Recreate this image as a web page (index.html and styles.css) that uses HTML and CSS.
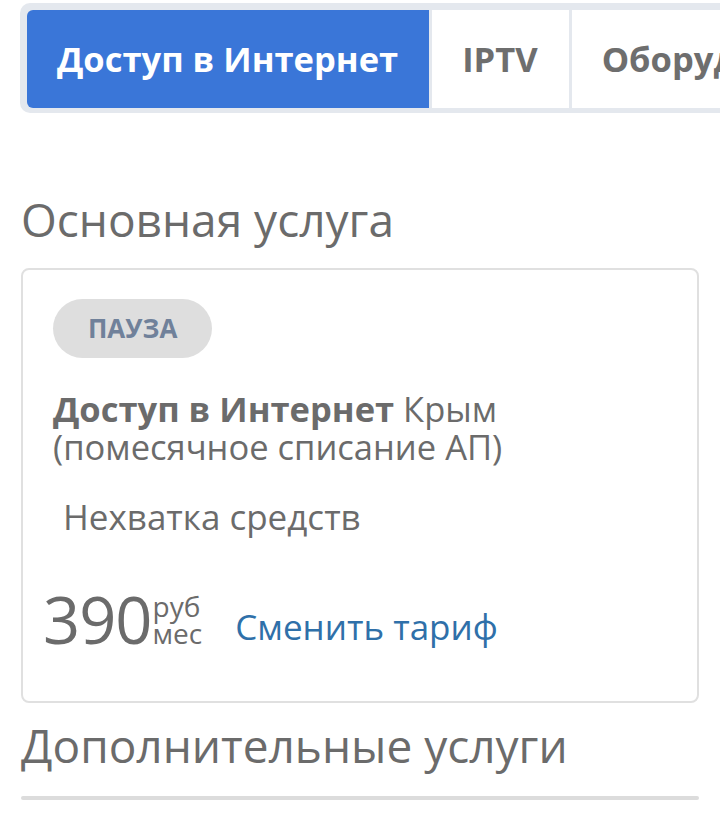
FILE: index.html
```html
<!DOCTYPE html>
<html lang="ru">
<head>
    <meta charset="UTF-8">
    <meta name="viewport" content="width=device-width, initial-scale=1.0">
    <title>Мои услуги</title>
    <link rel="stylesheet" href="styles.css">
</head>
<body>
    <!-- Tabs -->
    <div class="tabs">
        <div class="tab active">Доступ в Интернет</div>
        <div class="tab">IPTV</div>
        <div class="tab">Оборудование</div>
    </div>

    <div class="page">
        <h2 class="section-title">Основная услуга</h2>

        <div class="card">
            <span class="badge">ПАУЗА</span>
            <div class="service-name"><b>Доступ в Интернет</b> Крым (помесячное списание АП)</div>
            <div class="service-status">Нехватка средств</div>
            <div class="price-row">
                <div class="price">
                    <span class="price-value">390</span>
                    <span class="price-unit">
                        <span>руб</span>
                        <span>мес</span>
                    </span>
                </div>
                <a href="#" class="change-link">Сменить тариф</a>
            </div>
        </div>

        <h2 class="section-title extra">Дополнительные услуги</h2>
        <div class="divider"></div>
    </div>
</body>
</html>
```

FILE: styles.css
```css
/* Basic Reset */
* {
    box-sizing: border-box;
    margin: 0;
    padding: 0;
}

body {
    font-family: "Open Sans", "Noto Sans", Arial, sans-serif;
    color: #6b6b6b;
    background: #fff;
    overflow-x: hidden;
    padding-top: 3px;
}

/* Tabs */
.tabs {
    display: flex;
    gap: 3px;
    width: max-content;
    margin-left: 20px;
    padding: 7px 0 5px 7px;
    background: #e4e8ee;
    border-radius: 10px;
    white-space: nowrap;
}

.tab {
    height: 98px;
    line-height: 98px;
    padding: 0 31px 0 30px;
    background: #fff;
    font-size: 34.5px;
    font-weight: 700;
    color: #6e6e6e;
}

.tab.active {
    background: #3a76d8;
    color: #fff;
    border-radius: 6px 0 0 6px;
}

/* Content */
.page {
    padding: 0 21px;
}

.section-title {
    font-size: 46px;
    font-weight: 400;
    line-height: 52px;
    color: #6b6b6b;
    margin-top: 80px;
    margin-bottom: 23px;
}

.section-title.extra {
    margin-top: 16px;
    margin-bottom: 25px;
}

.card {
    border: 2px solid #e0e0e0;
    border-radius: 8px;
    padding: 29px 30px 52px 30px;
}

.badge {
    display: inline-block;
    height: 59px;
    line-height: 59px;
    padding: 0 35px;
    border-radius: 30px;
    background: #dedede;
    color: #70819a;
    font-size: 26px;
    font-weight: 700;
}

.service-name {
    margin-top: 32px;
    font-size: 34.5px;
    line-height: 38px;
}

.service-status {
    margin-top: 32px;
    padding-left: 10px;
    font-size: 35px;
    line-height: 38px;
}

.price-row {
    display: flex;
    align-items: flex-end;
    gap: 33px;
    margin-top: 53px;
    margin-left: -10px;
}

.price {
    display: flex;
    align-items: flex-end;
}

.price-value {
    font-size: 65px;
    line-height: 60px;
    letter-spacing: -1px;
}

.price-unit {
    display: flex;
    flex-direction: column;
    font-size: 28px;
    line-height: 27px;
    margin-left: 1px;
    padding-bottom: 2px;
}

.change-link {
    font-size: 35px;
    line-height: 44px;
    color: #2f70a9;
    text-decoration: none;
}

.divider {
    height: 4px;
    background: #dcdcdc;
    border-radius: 2px;
}
```
